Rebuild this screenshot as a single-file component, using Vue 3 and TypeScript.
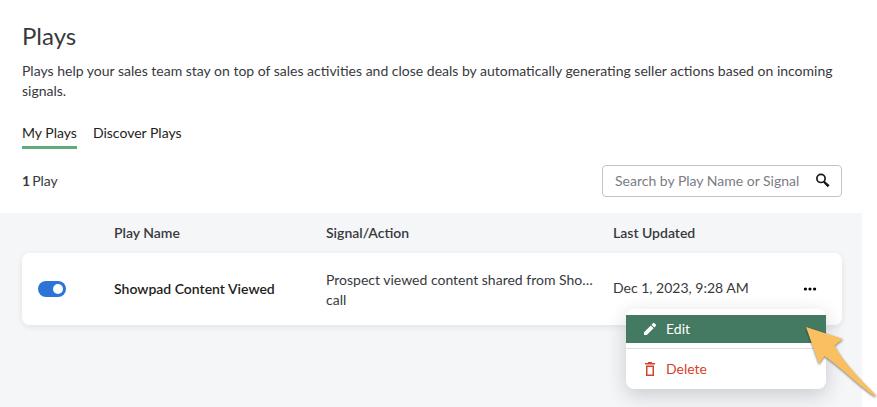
<script setup lang="ts">
import { ref } from 'vue'

interface Play {
  id: number
  name: string
  signal: string
  action: string
  updated: string
  enabled: boolean
}

const tabs = ['My Plays', 'Discover Plays']
const activeTab = ref(tabs[0])
const query = ref('')
const openMenu = ref<number | null>(1)
const plays = ref<Play[]>([
  {
    id: 1,
    name: 'Showpad Content Viewed',
    signal: 'Prospect viewed content shared from Sho…',
    action: 'call',
    updated: 'Dec 1, 2023, 9:28 AM',
    enabled: true,
  },
])

function toggleMenu(id: number) {
  openMenu.value = openMenu.value === id ? null : id
}
</script>

<template>
  <main class="page">
    <header class="intro">
      <h1>Plays</h1>
      <p>
        Plays help your sales team stay on top of sales activities and close deals by automatically
        generating seller actions based on incoming signals.
      </p>
      <nav class="tabs">
        <a
          v-for="tab in tabs"
          :key="tab"
          href="#"
          :class="{ active: tab === activeTab }"
          @click.prevent="activeTab = tab"
          >{{ tab }}</a
        >
      </nav>
      <div class="toolbar">
        <span class="count"><b>{{ plays.length }}</b><span>Play</span></span>
        <label class="search">
          <input v-model="query" type="text" placeholder="Search by Play Name or Signal" aria-label="Search plays" />
          <svg viewBox="0 0 16 16" width="16" height="16" aria-hidden="true">
            <circle cx="6" cy="5.4" r="4.1" fill="none" stroke="#17181a" stroke-width="1.7" />
            <path d="M8.6 8.5 10 8.3 14.6 12.3 12.7 14.2 8.6 10Z" fill="#17181a" />
          </svg>
        </label>
      </div>
    </header>

    <section class="list">
      <table>
        <thead>
          <tr>
            <th class="col-toggle"></th>
            <th class="col-name">Play Name</th>
            <th class="col-signal">Signal/Action</th>
            <th>Last Updated</th>
            <th class="col-menu"></th>
          </tr>
        </thead>
        <tbody>
          <tr v-for="play in plays" :key="play.id">
            <td class="toggle-cell">
              <input v-model="play.enabled" class="switch" type="checkbox" :aria-label="play.name" />
            </td>
            <td class="name">{{ play.name }}</td>
            <td class="signal">
              <div>{{ play.signal }}</div>
              <div>{{ play.action }}</div>
            </td>
            <td class="updated">{{ play.updated }}</td>
            <td class="menu-cell">
              <div class="actions">
                <button class="more" type="button" aria-label="More" @click="toggleMenu(play.id)">
                  <svg viewBox="0 0 14 4" width="14" height="4" aria-hidden="true">
                    <circle cx="2.4" cy="2" r="1.6" />
                    <circle cx="7" cy="2" r="1.6" />
                    <circle cx="11.6" cy="2" r="1.6" />
                  </svg>
                </button>
                <div v-if="openMenu === play.id" class="menu">
                  <button class="item edit" type="button">
                    <svg viewBox="0 0 16 16" width="16" height="16" aria-hidden="true">
                      <path
                        fill="currentColor"
                        d="M2 11.2V14h2.8l6.8-6.8-2.8-2.8ZM9.5 3.7l2.8 2.8 1.5-1.5a1.1 1.1 0 0 0 0-1.5l-1.3-1.3a1.1 1.1 0 0 0-1.5 0Z"
                      />
                    </svg>
                    Edit
                  </button>
                  <hr />
                  <button class="item delete" type="button">
                    <svg viewBox="0 0 16 16" width="16" height="16" aria-hidden="true">
                      <path
                        fill="currentColor"
                        fill-rule="evenodd"
                        d="M6 1h4v1h3v1.4H3V2h3ZM4 4.6h8V15H4ZM5.5 6v7.6h5V6Z"
                      />
                    </svg>
                    Delete
                  </button>
                  <svg class="pointer" viewBox="0 0 78 80" width="78" height="80" aria-hidden="true">
                    <path
                      fill="#f9bf60"
                      d="M2 2 39 14 30.5 20.5C40 38 54 52 72 70L71 71.500C52 59 38 43 20.500 31L15 39Z"
                    />
                  </svg>
                </div>
              </div>
            </td>
          </tr>
        </tbody>
      </table>
    </section>
  </main>
</template>

<style>
body {
  background: #fff;
}
</style>

<style scoped>
.page {
  box-sizing: border-box;
  display: flex;
  flex-direction: column;
  min-height: 100vh;
  padding-right: 15px;
  font-family: Lato, 'Liberation Sans', sans-serif;
  font-size: 14px;
  line-height: 20px;
  color: #38393d;
}
.intro {
  padding: 20px 20px 16px 22px;
}
h1 {
  margin: 0;
  font-size: 24px;
  line-height: 32px;
  font-weight: 400;
}
p {
  margin: 9px 0 22px;
}
.tabs {
  display: flex;
  gap: 16px;
}
.tabs a {
  padding-bottom: 3px;
  border-bottom: 3px solid transparent;
  color: #1d1e20;
  text-decoration: none;
}
.tabs a.active {
  border-color: #60ab79;
}
.toolbar {
  display: flex;
  align-items: center;
  justify-content: space-between;
  margin-top: 16px;
}
.count {
  display: flex;
  gap: 2px;
}
.search {
  box-sizing: border-box;
  display: flex;
  align-items: center;
  gap: 8px;
  width: 240px;
  height: 32px;
  padding: 0 10px 0 12px;
  border: 1px solid #c3c4c8;
  border-radius: 4px;
}
.search input {
  flex: 1;
  min-width: 0;
  padding: 0;
  border: 0;
  outline: 0;
  background: none;
  font: inherit;
  color: inherit;
}
.search input::placeholder {
  color: #7b7c84;
  opacity: 1;
}
.list {
  flex: 1;
  padding: 0 20px 16px 22px;
  background: #f5f6f8;
}
table {
  width: 100%;
  table-layout: fixed;
  border-spacing: 0;
}
th {
  height: 40px;
  padding: 0;
  text-align: left;
  font-weight: 600;
}
.col-toggle {
  width: 92px;
}
.col-name {
  width: 212px;
}
.col-signal {
  width: 35%;
}
.col-menu {
  width: 48px;
}
tbody tr {
  border-radius: 8px;
  box-shadow: 0 2px 6px rgba(30, 32, 40, 0.09);
}
td {
  box-sizing: border-box;
  height: 72px;
  padding: 0;
  background: #fff;
}
td:first-child {
  border-radius: 8px 0 0 8px;
}
td:last-child {
  border-radius: 0 8px 8px 0;
}
.toggle-cell {
  padding-left: 16px;
}
.switch {
  display: block;
  appearance: none;
  box-sizing: border-box;
  width: 28px;
  height: 16px;
  margin: 0;
  padding: 3px;
  border-radius: 8px;
  background: #a5a7ad;
}
.switch::before {
  content: '';
  display: block;
  width: 10px;
  height: 10px;
  border-radius: 50%;
  background: #fff;
}
.switch:checked {
  background: #2d74d8;
}
.switch:checked::before {
  margin-left: auto;
}
.name {
  color: #1d1e20;
  font-weight: 600;
}
.signal {
  padding-top: 2px;
}
.updated {
  padding-bottom: 2px;
}
.menu-cell {
  padding-right: 16px;
}
.actions {
  position: relative;
}
.more {
  display: flex;
  align-items: center;
  justify-content: center;
  width: 32px;
  height: 24px;
  padding: 0;
  border: 0;
  background: none;
}
.menu {
  position: absolute;
  top: 32px;
  right: 0;
  box-sizing: border-box;
  width: 200px;
  padding: 6px 0;
  border-radius: 8px;
  background: #fff;
  box-shadow: 0 6px 20px rgba(30, 32, 40, 0.2);
}
.item {
  display: flex;
  align-items: center;
  gap: 8px;
  width: 100%;
  height: 28px;
  padding: 0 16px;
  border: 0;
  background: none;
  font: inherit;
}
.edit {
  background: #447962;
  color: #fff;
}
.delete {
  color: #d8412b;
}
hr {
  height: 1px;
  margin: 5px 0 6px;
  border: 0;
  background: #dddee1;
}
.pointer {
  position: absolute;
  top: 16px;
  left: 178px;
  filter: drop-shadow(0 1px 1px rgba(0, 0, 0, 0.5));
  pointer-events: none;
}
</style>
